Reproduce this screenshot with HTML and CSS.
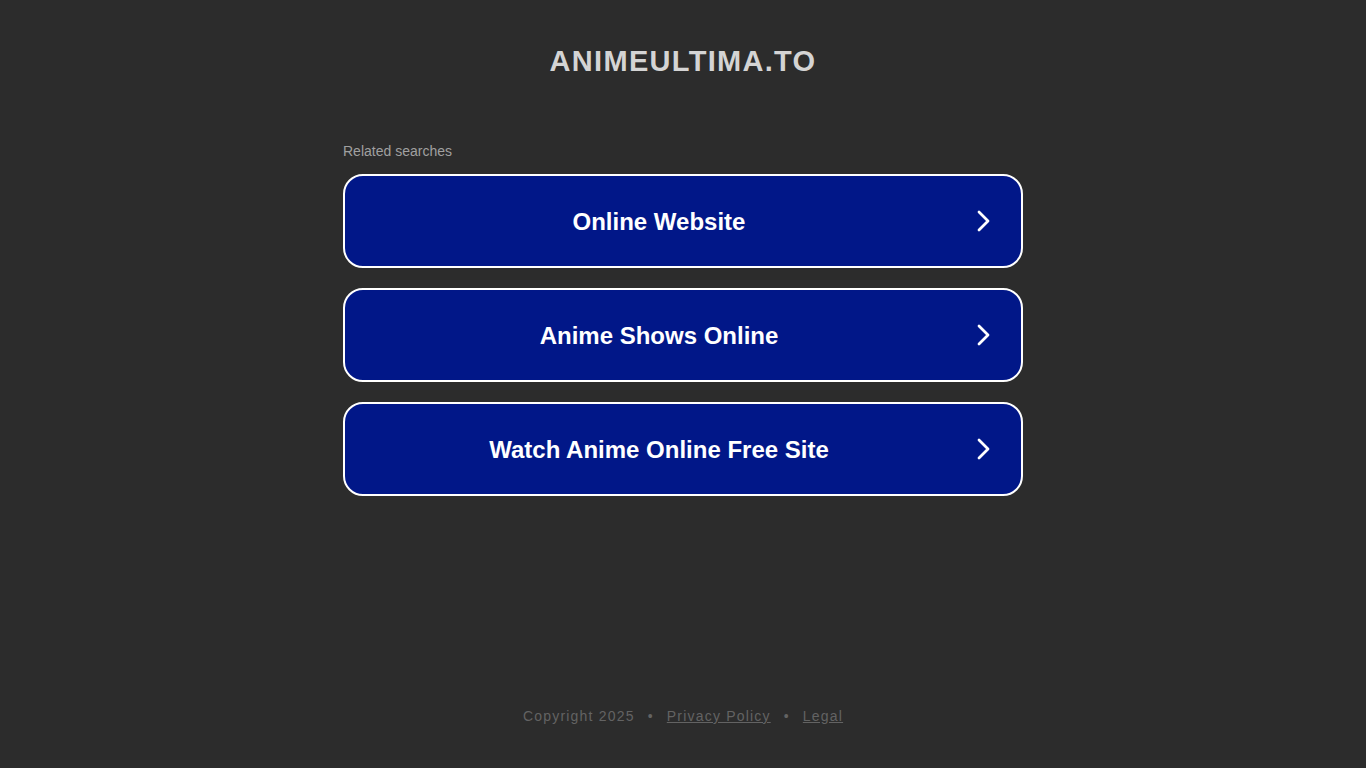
FILE: index.html
```html
<!DOCTYPE html>
<html>
<head>
<meta charset="utf-8">
<link rel="stylesheet" href="styles.css">
</head>
<body>
<div class="page">
  <header class="header">ANIMEULTIMA.TO</header>
  <main class="main">
    <div class="related">Related searches</div>
    <div class="list">
      <a class="item" href="#"><span class="label">Online Website</span><svg class="chev" viewBox="0 0 24 24" width="24" height="24"><path d="M8 3 L17 12 L8 21" fill="none" stroke="#fff" stroke-width="2.8" stroke-linecap="round" stroke-linejoin="round"/></svg></a>
      <a class="item" href="#"><span class="label">Anime Shows Online</span><svg class="chev" viewBox="0 0 24 24" width="24" height="24"><path d="M8 3 L17 12 L8 21" fill="none" stroke="#fff" stroke-width="2.8" stroke-linecap="round" stroke-linejoin="round"/></svg></a>
      <a class="item" href="#"><span class="label">Watch Anime Online Free Site</span><svg class="chev" viewBox="0 0 24 24" width="24" height="24"><path d="M8 3 L17 12 L8 21" fill="none" stroke="#fff" stroke-width="2.8" stroke-linecap="round" stroke-linejoin="round"/></svg></a>
    </div>
  </main>
  <footer class="footer">
    <span>Copyright 2025</span><span class="dot">•</span><a href="#">Privacy Policy</a><span class="dot">•</span><a href="#">Legal</a>
  </footer>
</div>
</body>
</html>
```

FILE: styles.css
```css
html, body {
  margin: 0;
  padding: 0;
  background: #2c2c2c;
  font-family: "Liberation Sans", Arial, sans-serif;
}
.page {
  height: 768px;
  display: flex;
  flex-direction: column;
  align-items: center;
}
.header {
  margin-top: 44px;
  font-size: 29px;
  line-height: 34px;
  font-weight: bold;
  letter-spacing: 1.3px;
  color: #d4d4d4;
}
.main {
  width: 680px;
  margin-top: 65px;
}
.related {
  font-size: 14px;
  line-height: 16px;
  color: #a0a0a0;
  margin-bottom: 15px;
}
.list {
  display: flex;
  flex-direction: column;
  gap: 20px;
}
.item {
  box-sizing: border-box;
  height: 94px;
  padding-top: 2px;
  border: 2px solid #fff;
  border-radius: 20px;
  background: #011788;
  display: flex;
  align-items: center;
  justify-content: center;
  position: relative;
  text-decoration: none;
}
.label {
  color: #fff;
  font-size: 24px;
  font-weight: bold;
  margin-right: 48px;
}
.chev {
  position: absolute;
  right: 26px;
  top: 33px;
}
.footer {
  margin-top: auto;
  margin-bottom: 43px;
  font-size: 14px;
  line-height: 18px;
  letter-spacing: 1.2px;
  color: #636363;
  display: flex;
}
.footer a {
  color: #636363;
}
.dot {
  margin: 0 13px;
}
```
